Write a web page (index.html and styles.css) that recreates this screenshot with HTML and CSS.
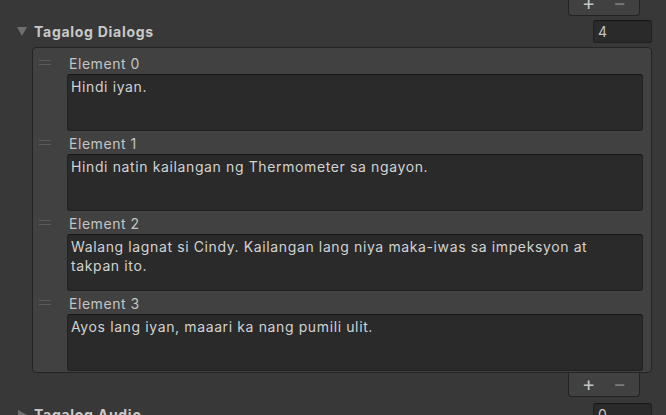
FILE: index.html
```html
<!DOCTYPE html>
<html>
<head>
<meta charset="utf-8">
<link rel="stylesheet" href="styles.css">
</head>
<body>
<div class="inspector">
  <div class="footer-row top">
    <div class="footer">
      <span class="btn plus">+</span>
      <span class="btn minus">−</span>
    </div>
  </div>

  <div class="header">
    <span class="tri down"></span>
    <span class="title">Tagalog Dialogs</span>
    <span class="count">4</span>
  </div>

  <div class="list">
    <div class="item">
      <div class="handle"><span></span><span></span></div>
      <div class="body">
        <div class="label">Element 0</div>
        <div class="field">Hindi iyan.</div>
      </div>
    </div>
    <div class="item">
      <div class="handle"><span></span><span></span></div>
      <div class="body">
        <div class="label">Element 1</div>
        <div class="field">Hindi natin kailangan ng Thermometer sa ngayon.</div>
      </div>
    </div>
    <div class="item">
      <div class="handle"><span></span><span></span></div>
      <div class="body">
        <div class="label">Element 2</div>
        <div class="field">Walang lagnat si Cindy. Kailangan lang niya maka-iwas sa impeksyon at takpan ito.</div>
      </div>
    </div>
    <div class="item">
      <div class="handle"><span></span><span></span></div>
      <div class="body">
        <div class="label">Element 3</div>
        <div class="field">Ayos lang iyan, maaari ka nang pumili ulit.</div>
      </div>
    </div>
  </div>

  <div class="footer-row">
    <div class="footer">
      <span class="btn plus">+</span>
      <span class="btn minus">−</span>
    </div>
  </div>

  <div class="header second">
    <span class="tri right"></span>
    <span class="title">Tagalog Audio</span>
    <span class="count">0</span>
  </div>
</div>
</body>
</html>
```
FILE: styles.css
```css
* { box-sizing: border-box; }
html, body {
  margin: 0;
  padding: 0;
  width: 666px;
  height: 415px;
  overflow: hidden;
  background: #383838;
  font-family: Inter, "Noto Sans", sans-serif;
  color: #c4c4c4;
}
.inspector {
  display: flex;
  flex-direction: column;
  width: 666px;
}
.footer-row {
  display: flex;
  justify-content: flex-end;
  padding-right: 26px;
}
.footer-row.top { margin-top: -8px; }
.footer {
  width: 72px;
  height: 24px;
  background: #414141;
  border: 1px solid #232323;
  border-top: none;
  border-radius: 0 0 4px 4px;
  display: flex;
  align-items: center;
  justify-content: center;
  gap: 17px;
  padding-bottom: 1px;
}
.btn {
  font-size: 20px;
  line-height: 20px;
  width: 14px;
  text-align: center;
}
.plus { color: #c4c4c4; }
.minus { color: #7a7a7a; }

.header {
  display: flex;
  align-items: center;
  height: 23px;
  margin-top: 4px;
  padding-left: 16px;
  padding-right: 14px;
}
.header.second { margin-top: 6px; }
.tri { width: 0; height: 0; margin-right: 7px; }
.tri.down {
  border-left: 5px solid transparent;
  border-right: 5px solid transparent;
  border-top: 9px solid #6e6e6e;
  margin-left: 1px;
  margin-right: 7px;
}
.tri.right {
  border-top: 5px solid transparent;
  border-bottom: 5px solid transparent;
  border-left: 9px solid #6e6e6e;
  margin-left: 2px;
  margin-right: 7px;
}
.title {
  font-weight: 700;
  font-size: 14px;
  letter-spacing: 0.72px;
  color: #c8c8c8;
  flex: 1;
}
.count {
  width: 59px;
  height: 23px;
  background: #2a2a2a;
  border: 1px solid #202020;
  border-top-color: #161616;
  border-radius: 3px;
  font-size: 14px;
  line-height: 21px;
  padding-left: 4px;
  color: #c4c4c4;
  letter-spacing: 0.6px;
}

.list {
  margin-top: 4px;
  margin-left: 32px;
  width: 620px;
  background: #414141;
  border: 1px solid #242424;
  border-radius: 4px;
  padding: 6px 8px 1px 0;
  display: flex;
  flex-direction: column;
  gap: 3px;
}
.item {
  display: flex;
}
.handle {
  width: 34px;
  padding-left: 6px;
  padding-top: 6px;
  display: flex;
  flex-direction: column;
  gap: 3px;
}
.handle span {
  display: block;
  width: 12px;
  height: 1px;
  background: #5c5c5c;
}
.body { flex: 1; }
.label {
  height: 20px;
  line-height: 20px;
  font-size: 14px;
  letter-spacing: 0.55px;
  padding-left: 2px;
  color: #c4c4c4;
}
.field {
  height: 57px;
  background: #2a2a2a;
  border: 1px solid #212121;
  border-top-color: #141414;
  border-radius: 3px;
  padding: 2px 3px;
  font-size: 14px;
  line-height: 19px;
  letter-spacing: 0.62px;
  color: #d2d2d2;
}
```
